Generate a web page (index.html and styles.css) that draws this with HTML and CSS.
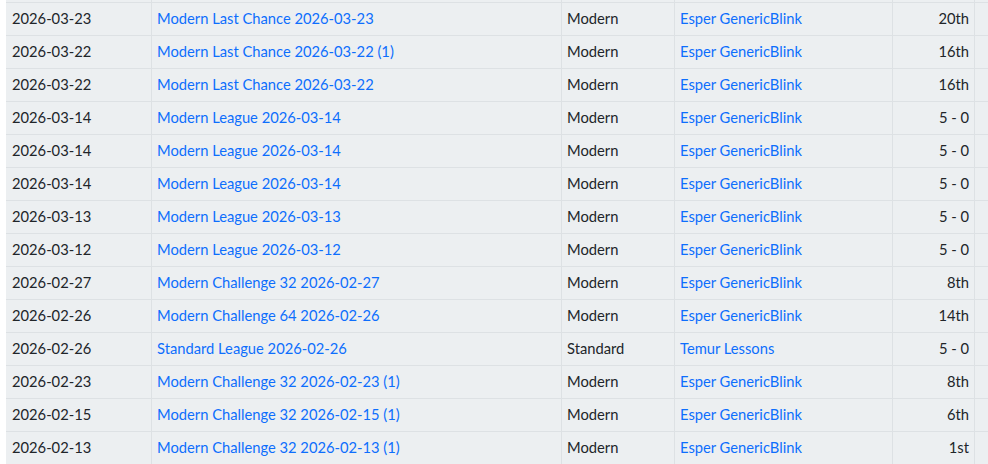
FILE: index.html
```html
<!DOCTYPE html>
<html>
<head>
<meta charset="utf-8">
<link rel="stylesheet" href="styles.css">
</head>
<body>
<div class="wrap">
<table class="results">
<colgroup>
<col class="c-date"><col class="c-event"><col class="c-format"><col class="c-deck"><col class="c-place"><col class="c-extra">
</colgroup>
<tbody>
<tr><td>&nbsp;</td><td></td><td></td><td></td><td></td><td></td></tr>
<tr><td>2026-03-23</td><td><a href="#">Modern Last Chance 2026-03-23</a></td><td>Modern</td><td><a href="#">Esper GenericBlink</a></td><td class="num">20th</td><td></td></tr>
<tr><td>2026-03-22</td><td><a href="#">Modern Last Chance 2026-03-22 (1)</a></td><td>Modern</td><td><a href="#">Esper GenericBlink</a></td><td class="num">16th</td><td></td></tr>
<tr><td>2026-03-22</td><td><a href="#">Modern Last Chance 2026-03-22</a></td><td>Modern</td><td><a href="#">Esper GenericBlink</a></td><td class="num">16th</td><td></td></tr>
<tr><td>2026-03-14</td><td><a href="#">Modern League 2026-03-14</a></td><td>Modern</td><td><a href="#">Esper GenericBlink</a></td><td class="num">5 - 0</td><td></td></tr>
<tr><td>2026-03-14</td><td><a href="#">Modern League 2026-03-14</a></td><td>Modern</td><td><a href="#">Esper GenericBlink</a></td><td class="num">5 - 0</td><td></td></tr>
<tr><td>2026-03-14</td><td><a href="#">Modern League 2026-03-14</a></td><td>Modern</td><td><a href="#">Esper GenericBlink</a></td><td class="num">5 - 0</td><td></td></tr>
<tr><td>2026-03-13</td><td><a href="#">Modern League 2026-03-13</a></td><td>Modern</td><td><a href="#">Esper GenericBlink</a></td><td class="num">5 - 0</td><td></td></tr>
<tr><td>2026-03-12</td><td><a href="#">Modern League 2026-03-12</a></td><td>Modern</td><td><a href="#">Esper GenericBlink</a></td><td class="num">5 - 0</td><td></td></tr>
<tr><td>2026-02-27</td><td><a href="#">Modern Challenge 32 2026-02-27</a></td><td>Modern</td><td><a href="#">Esper GenericBlink</a></td><td class="num">8th</td><td></td></tr>
<tr><td>2026-02-26</td><td><a href="#">Modern Challenge 64 2026-02-26</a></td><td>Modern</td><td><a href="#">Esper GenericBlink</a></td><td class="num">14th</td><td></td></tr>
<tr><td>2026-02-26</td><td><a href="#">Standard League 2026-02-26</a></td><td>Standard</td><td><a href="#">Temur Lessons</a></td><td class="num">5 - 0</td><td></td></tr>
<tr><td>2026-02-23</td><td><a href="#">Modern Challenge 32 2026-02-23 (1)</a></td><td>Modern</td><td><a href="#">Esper GenericBlink</a></td><td class="num">8th</td><td></td></tr>
<tr><td>2026-02-15</td><td><a href="#">Modern Challenge 32 2026-02-15 (1)</a></td><td>Modern</td><td><a href="#">Esper GenericBlink</a></td><td class="num">6th</td><td></td></tr>
<tr><td>2026-02-13</td><td><a href="#">Modern Challenge 32 2026-02-13 (1)</a></td><td>Modern</td><td><a href="#">Esper GenericBlink</a></td><td class="num">1st</td><td></td></tr>
<tr><td>&nbsp;</td><td></td><td></td><td></td><td></td><td></td></tr>
</tbody>
</table>
</div>
</body>
</html>
```

FILE: styles.css
```css
html, body {
  margin: 0;
  padding: 0;
  background: #ffffff;
  overflow: hidden;
  height: 464px;
}
body {
  font-family: Lato, "Noto Sans", sans-serif;
  font-size: 14.72px;
  color: #212529;
}
.wrap {
  padding-left: 6px;
}
.results {
  border-collapse: collapse;
  table-layout: fixed;
  width: 1050px;
  margin-top: -31px;
  background: #eceff1;
}
.c-date { width: 145px; }
.c-event { width: 410px; }
.c-format { width: 113px; }
.c-deck { width: 218px; }
.c-place { width: 82px; }
.c-extra { width: 82px; }
.results td {
  border: 1px solid #dde1e4;
  padding: 4px 5px 6px 5px;
  line-height: 22px;
  height: 22px;
  white-space: nowrap;
  overflow: hidden;
  text-align: left;
}
.results tr td:first-child {
  border-left: 1px solid #eceff1;
}
.results td.num {
  text-align: right;
}
.results a {
  color: #0d6efd;
  text-decoration: none;
}
```
